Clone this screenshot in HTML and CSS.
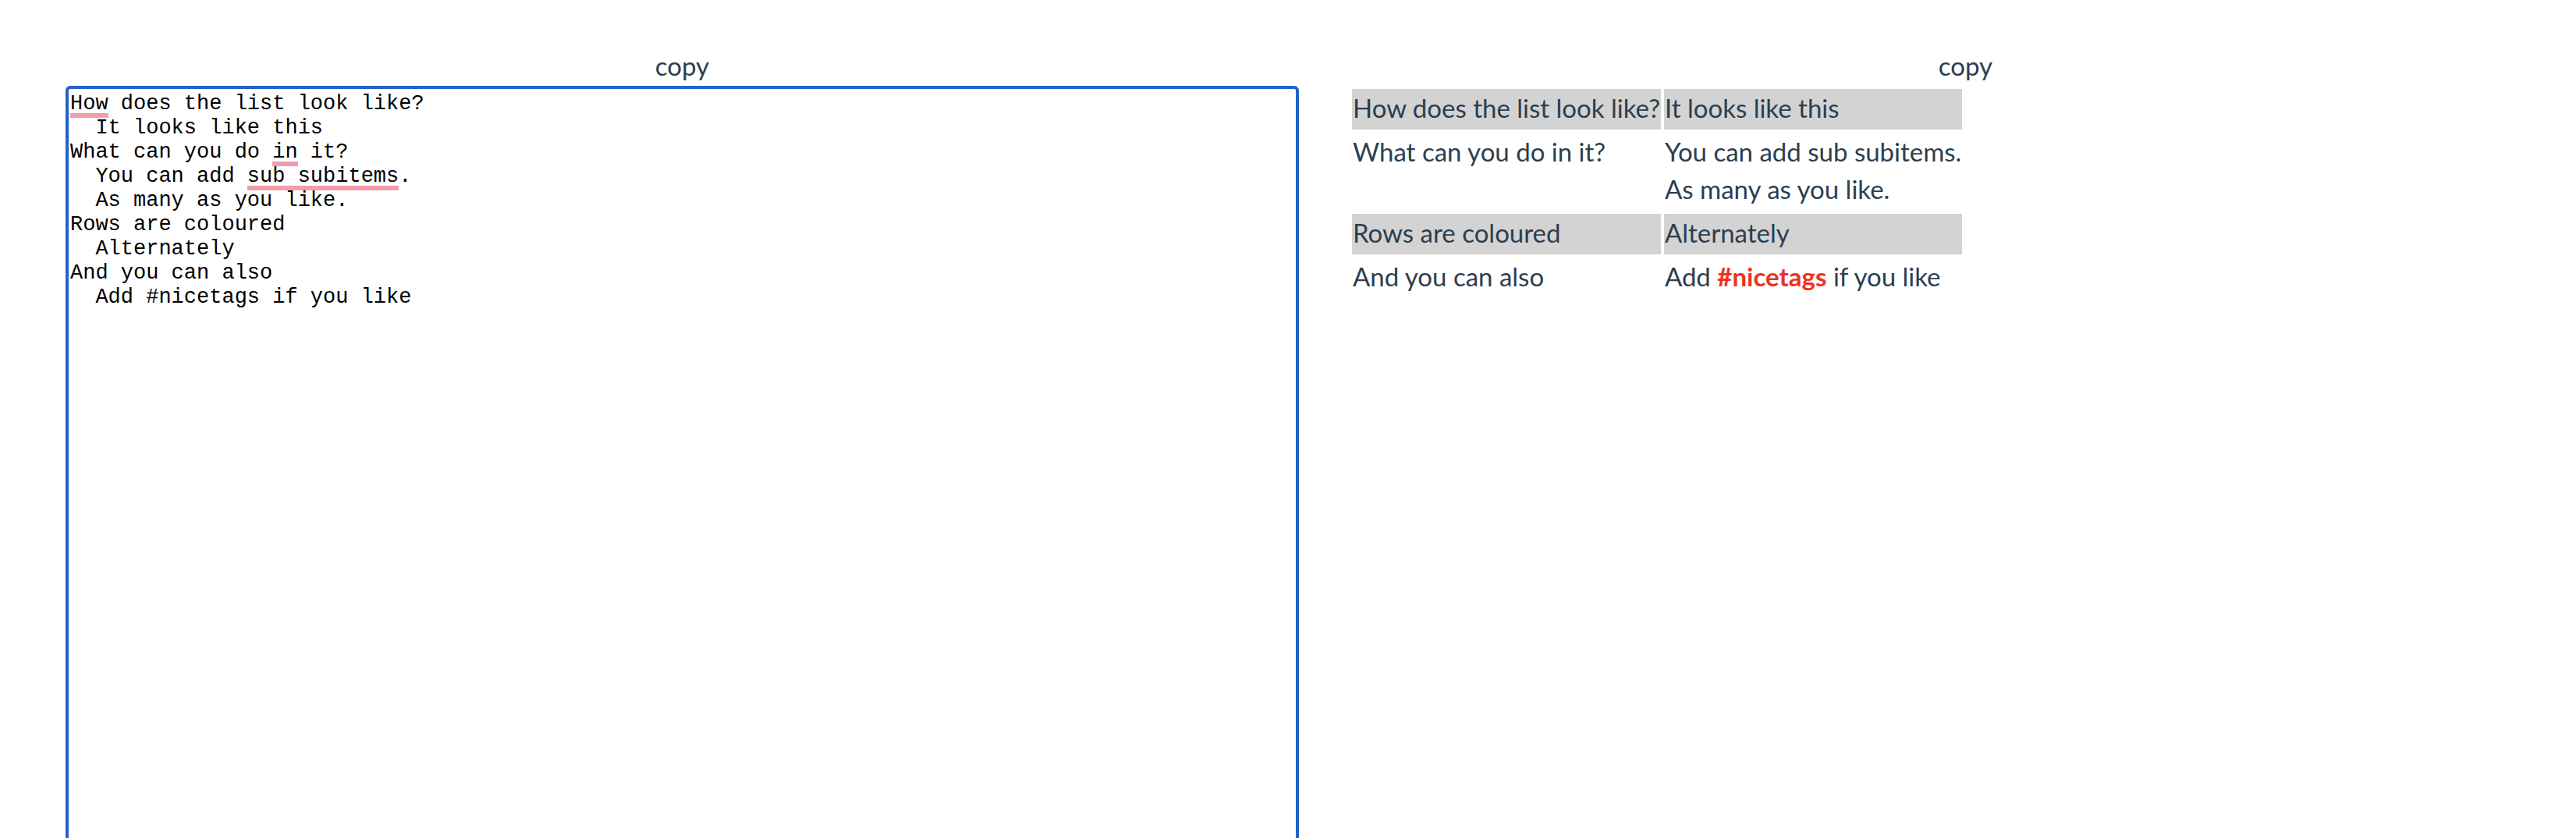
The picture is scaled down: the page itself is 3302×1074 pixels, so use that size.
FILE: index.html
```html
<!DOCTYPE html>
<html lang="en">
<head>
<meta charset="utf-8">
<title>List to table</title>
<link rel="stylesheet" href="styles.css">
</head>
<body>
<main class="app">
  <section class="pane">
    <button class="copy" type="button">copy</button>
    <div class="editor">
      <textarea class="editor-input" aria-label="List" spellcheck="false">How does the list look like?
  It looks like this
What can you do in it?
  You can add sub subitems.
  As many as you like.
Rows are coloured
  Alternately
And you can also
  Add #nicetags if you like</textarea>
      <span class="mark mark-how"></span>
      <span class="mark mark-in"></span>
      <span class="mark mark-subitems"></span>
    </div>
  </section>
  <section class="pane">
    <button class="copy" type="button">copy</button>
    <table class="list">
      <tbody>
        <tr><td>How does the list look like?</td><td>It looks like this</td></tr>
        <tr><td>What can you do in it?</td><td>You can add sub subitems.<br>As many as you like.</td></tr>
        <tr><td>Rows are coloured</td><td>Alternately</td></tr>
        <tr><td>And you can also</td><td>Add <span class="tag">#nicetags</span> if you like</td></tr>
      </tbody>
    </table>
  </section>
</main>
</body>
</html>
```
FILE: styles.css
```css
* {
  box-sizing: border-box;
}

body {
  margin: 0;
  overflow: hidden;
  background: #fff;
  color: #2c3e50;
  font-family: Lato, "Open Sans", sans-serif;
  font-size: 33px;
  line-height: 48px;
}

.app {
  display: grid;
  grid-template-columns: 1fr 1fr;
  gap: 64px;
  height: calc(100vh + 8px);
  margin-right: -8px;
  padding: 60px 0 0 84px;
}

.pane {
  display: flex;
  flex-direction: column;
  align-items: flex-start;
  min-width: 0;
}

.copy {
  align-self: center;
  padding: 0 0 2px;
  border: 0;
  background: none;
  color: inherit;
  font: inherit;
  cursor: pointer;
}

.editor {
  position: relative;
  flex: 1;
  width: 100%;
  font-family: "Liberation Mono", monospace;
  font-size: 27px;
  line-height: 31px;
}

.editor-input {
  display: block;
  width: 100%;
  height: 100%;
  padding: 4px 2px;
  border: 4px solid #2462c6;
  border-radius: 6px;
  outline: 0;
  background: #fff;
  color: #000;
  font: inherit;
  resize: none;
}

/* Spelling marks, placed by character column and line */
.mark {
  position: absolute;
  height: 6px;
  background: #f29dab;
  pointer-events: none;
}

.mark-how {
  top: 35px;
  left: 6px;
  width: 3ch;
}

.mark-in {
  top: 97px;
  left: calc(6px + 16ch);
  width: 2ch;
}

.mark-subitems {
  top: 128px;
  left: calc(6px + 14ch);
  width: 12ch;
}

.list {
  border-spacing: 4px;
}

.list td {
  padding: 0 1px 4px;
  vertical-align: top;
  white-space: nowrap;
}

.list tr:nth-child(odd) td {
  background: #d3d3d3;
}

.tag {
  color: #eb3323;
  font-weight: bold;
}
```
